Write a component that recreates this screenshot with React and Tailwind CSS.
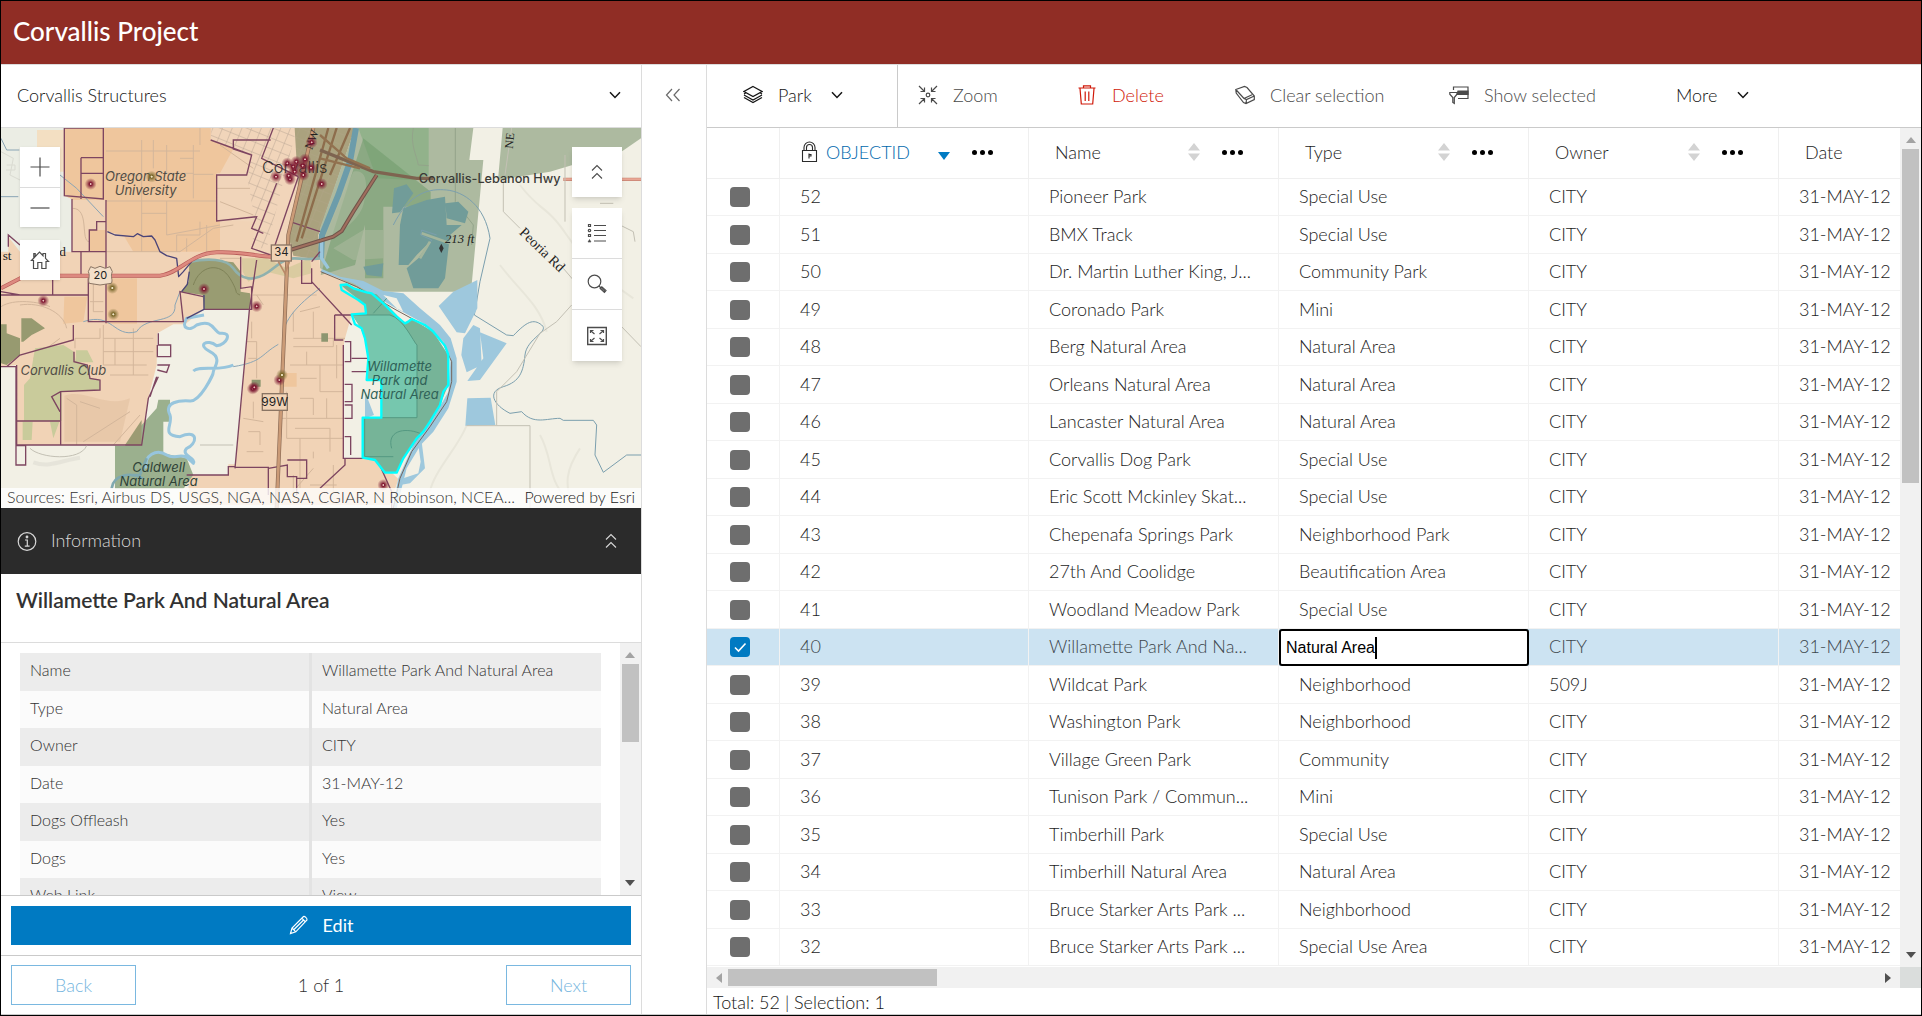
import { useState } from 'react';

const parks = [
  [52, 'Pioneer Park', 'Special Use', 'CITY'],
  [51, 'BMX Track', 'Special Use', 'CITY'],
  [50, 'Dr. Martin Luther King, J...', 'Community Park', 'CITY'],
  [49, 'Coronado Park', 'Mini', 'CITY'],
  [48, 'Berg Natural Area', 'Natural Area', 'CITY'],
  [47, 'Orleans Natural Area', 'Natural Area', 'CITY'],
  [46, 'Lancaster Natural Area', 'Natural Area', 'CITY'],
  [45, 'Corvallis Dog Park', 'Special Use', 'CITY'],
  [44, 'Eric Scott Mckinley Skat...', 'Special Use', 'CITY'],
  [43, 'Chepenafa Springs Park', 'Neighborhood Park', 'CITY'],
  [42, '27th And Coolidge', 'Beautification Area', 'CITY'],
  [41, 'Woodland Meadow Park', 'Special Use', 'CITY'],
  [40, 'Willamette Park And Na...', 'Natural Area', 'CITY'],
  [39, 'Wildcat Park', 'Neighborhood', '509J'],
  [38, 'Washington Park', 'Neighborhood', 'CITY'],
  [37, 'Village Green Park', 'Community', 'CITY'],
  [36, 'Tunison Park / Commun...', 'Mini', 'CITY'],
  [35, 'Timberhill Park', 'Special Use', 'CITY'],
  [34, 'Timberhill Natural Area', 'Natural Area', 'CITY'],
  [33, 'Bruce Starker Arts Park ...', 'Neighborhood', 'CITY'],
  [32, 'Bruce Starker Arts Park ...', 'Special Use Area', 'CITY'],
];

const details = [
  ['Name', 'Willamette Park And Natural Area'],
  ['Type', 'Natural Area'],
  ['Owner', 'CITY'],
  ['Date', '31-MAY-12'],
  ['Dogs Offleash', 'Yes'],
  ['Dogs', 'Yes'],
  ['Web Link', 'View'],
];

const structureDots = [
  [272, 177], [828, 155], [880, 125], [915, 103], [870, 163], [866, 152], [910, 150], [908, 122], [933, 128], [862, 115], [889, 110], [884, 140],
  [935, 52], [965, 177], [612, 492], [770, 544], [130, 527], [758, 791], [763, 787], [838, 765], [1150, 1080],
];
const parkDots = [[455, 155], [337, 489], [340, 568], [846, 750]];

const Icon = ({ size = 20, children, className = '' }) => (
  <svg width={size} height={size} viewBox="0 0 20 20" fill="none" stroke="currentColor" strokeWidth="1.2" className={`shrink-0 ${className}`} aria-hidden="true">
    {children}
  </svg>
);

const ChevronDown = () => (
  <svg width="12" height="8" viewBox="0 0 12 8" fill="none" stroke="currentColor" strokeWidth="1.5" className="shrink-0" aria-hidden="true">
    <path d="M1 1.2 6 6.4 11 1.2" />
  </svg>
);

const ChevronsUp = ({ className = '' }) => (
  <svg width="12" height="16" viewBox="0 0 12 16" fill="none" stroke="currentColor" strokeWidth="1.1" className={className} aria-hidden="true">
    <path d="M1 6.5 6 1.5 11 6.5M1 14.5 6 9.5 11 14.5" />
  </svg>
);

const Arrow = ({ dir, className = '' }) => {
  const shapes = {
    up: 'M5 2 10 8H0Z',
    down: 'M5 8 0 2H10Z',
    left: 'M2 5 8 0V10Z',
    right: 'M8 5 2 0V10Z',
  };
  return (
    <svg width="10" height="10" viewBox="0 0 10 10" fill="currentColor" className={className} aria-hidden="true">
      <path d={shapes[dir]} />
    </svg>
  );
};

const ParkMap = () => (
  <svg viewBox="3 9 1920 1140" preserveAspectRatio="xMidYMid slice" className="absolute inset-0 h-full w-full" role="img" aria-label="Map of Corvallis">
    <defs>
      <pattern id="streets" width="27" height="30" patternUnits="userSpaceOnUse" patternTransform="rotate(22)">
        <path d="M0 0H27M0 0V30" stroke="#bba896" strokeWidth="3" fill="none" />
      </pattern>
      <radialGradient id="maroon">
        <stop offset="0.08" stopColor="#e8c5bc" />
        <stop offset="0.22" stopColor="#7d0f2c" />
        <stop offset="0.5" stopColor="#7d1c34" stopOpacity="0.6" />
        <stop offset="1" stopColor="#7d1c34" stopOpacity="0" />
      </radialGradient>
      <radialGradient id="olive">
        <stop offset="0.1" stopColor="#f0e5c8" />
        <stop offset="0.24" stopColor="#7a6728" />
        <stop offset="0.5" stopColor="#7a6a30" stopOpacity="0.6" />
        <stop offset="1" stopColor="#7a6a30" stopOpacity="0" />
      </radialGradient>
      <clipPath id="city">
        <path d="M193 9V212L216 222V380H60L25 335V380H3V725L50 720V960H425L445 820 470 720 472 625 520 598H555L612 553H748L706 1018H685V1050H560L345 1140H1170L1195 1062 1130 1000H1032V650L1055 570 1100 565 1180 560 1060 480 960 430 955 330 1065 9Z" />
      </clipPath>
    </defs>

    {/* land */}
    <rect x="3" y="9" width="1920" height="1140" fill="#f2f0e5" />
    <path d="M3 9H193V212L216 222V380H3Z" fill="#ebede4" />
    <path d="M3 80 40 100 30 150 70 170M20 120H45V135H18" stroke="#dadbd2" strokeWidth="3" fill="none" />
    <path d="M111 15H193V140H111Z" fill="#f3dfc2" />
    <path d="M1560 180C1620 260 1640 240 1700 330S1840 480 1900 520M1500 420C1560 500 1620 540 1640 620M1400 900C1380 960 1300 1040 1290 1100M1620 930C1660 1000 1640 1060 1700 1120M1740 970C1700 1030 1690 1080 1720 1140" stroke="#e8e6da" strokeWidth="6" fill="none" />
    <path d="M100 1012C150 1030 190 1004 240 998" stroke="#dddcd2" strokeWidth="12" fill="none" opacity="0.6" />

    {/* city limits */}
    <path d="M193 9V212L216 222V380H60L25 335V380H3V725L50 720V960H425L445 820 470 720 472 625 520 598H555L612 553H748L706 1018H685V1050H560L345 1140H1170L1195 1062 1130 1000H1032V650L1055 570 1100 565 1180 560 1060 480 960 430 955 330 1065 9Z" fill="#f1d3b6" />
    <path d="M345 1092 560 1050 575 1149H345Z" fill="#f2f0e5" />
    <g clipPath="url(#city)">
      <path d="M193 9H632V45L700 72 660 145V380H400L370 330 322 320 318 225H193Z" fill="#efc69d" />
      <path d="M318 460H411V596H318ZM193 515H262L250 590 190 596ZM268 315H318V380H268ZM838 744H890V785H838Z" fill="#efc69d" />
      <path d="M193 812C250 790 320 850 390 820L360 950H193Z" fill="#e4c3a4" opacity="0.7" />
      <path d="M635 9H1070L955 330 870 400 755 370 765 290 650 285V145H740L755 90 632 45Z" fill="#f1d5ba" />
      <path d="M635 9H890L800 370 755 370 765 290 740 145 755 90 632 45Z" fill="url(#streets)" />
      <path d="M884 9H1070L962 310V405L880 392 866 335 895 200Z" fill="#aaa27e" />
      <path d="M884 9H1070L962 310V405L880 392 866 335 895 200Z" fill="url(#streets)" opacity="0.35" />
    </g>

    {/* local streets */}
    <path
      d="M318 228H650M318 78H600M425 45V380M500 228V330L660 300M580 148H640M580 60V220M500 60V145H580M425 265H500M318 380H540L640 310 700 300M460 45V130M340 150H425M530 380V330H600V290M650 190H750M660 230 760 270M218 250C270 250 240 350 268 350M60 540C120 530 190 560 200 610M3 545C40 520 120 530 150 545M100 700 180 640M200 820 230 840V960M240 830 300 850M420 870 340 960M390 860 250 950M280 470V560H310M270 530H310M740 510H950M900 560 960 545M880 640H1035M870 720H1030M860 800V940H1030M840 880H1035M900 940V1090M740 650H770V760M730 880 790 890M740 980H790M870 1110 940 1030M1000 1020V1100M660 400H720M770 510 790 540M225 640H300V610M310 600V720H440M310 640H460M310 680H460M345 640V720M400 610V750M330 750H445M225 640V670M880 560V620M940 560V640M880 665H1000V640M920 680V720M960 720V800H1030M900 760H950M900 820H940V870M980 820V880M885 910H990V980M1010 660V760M940 980V1000M755 590V640M745 700H770M760 830V880M745 920H780V960M880 1050V1110M930 1080H1010M660 60 760 130M600 9V60M540 100H580M620 300V380M560 340V380"
      stroke="#d3b69b"
      strokeWidth="3"
      fill="none"
    />

    {/* parks */}
    <path d="M568 410 610 402 700 412 722 440V500L750 505V553H612L608 510 542 500 566 470Z" fill="#999c72" />
    <path d="M3 598H20V625L60 640V690L20 720 3 715ZM64 580H95L135 610 95 630 70 650H64Z" fill="#979a70" />
    <path d="M105 670 190 660 222 680 228 712 262 720 268 760 300 765V795L185 800V888H72V780L90 760Z" fill="#c9cb9b" />
    <path d="M228 676H262L280 712H228ZM68 890H98L95 945H68ZM150 890H178L160 940Z" fill="#c9cb9b" />
    <path d="M725 400H800L860 430 930 400 935 445 880 460 800 440 745 470 728 440Z" fill="#dacba0" />
    <path d="M345 962H375L425 900 470 850 475 824H510V890H490V985L560 1000 580 1050 550 1092H345Z" fill="#9bb08e" />
    <path d="M425 885 375 960H424Z" fill="#9c9b73" />
    <path d="M755 764H782V785H755ZM964 625H984V650H964Z" fill="#8d9670" />
    <path d="M580 480C600 420 660 410 690 460S700 500 720 510" stroke="#7f8258" strokeWidth="3" fill="none" />

    {/* flood plain east of the river */}
    <path d="M1065 9H1420L1408 105H1450L1413 500H1095L960 430V310Z" fill="#adbaa0" />
    <path d="M1508 9H1923V40L1850 90 1750 110 1650 140 1494 165Z" fill="#adbaa0" />
    <path d="M1075 9H1286V150L1240 165 1130 160Z" fill="#92b28b" />
    <path d="M1090 40 1292 200V245H1150V460H1095V300L1065 420 962 450 1000 320Z" fill="#6f9a6c" opacity="0.55" />
    <path d="M1060 140C1110 130 1100 200 1090 240S1020 330 975 340ZM1090 315H1150V400L1060 405 1000 370Z" fill="#aab99d" opacity="0.6" />
    <path d="M1240 9C1230 60 1250 90 1255 120L1286 122M1366 9V230L1420 300 1415 360" stroke="#93a48a" strokeWidth="3" fill="none" />
    <path d="M1182 190 1220 178 1240 205 1200 262 1176 265ZM1090 425 1150 415 1145 455 1100 450ZM1210 250 1280 225 1335 215 1340 300 1385 300 1350 330 1335 460 1315 490 1240 490 1220 430 1255 400 1290 350 1250 390 1225 420 1196 420 1200 300ZM1336 235 1375 230 1405 260 1395 295 1340 280Z" fill="#719c99" />
    <path d="M1310 330 1265 315 1262 330 1295 345 1260 400M1180 300C1230 200 1290 190 1340 195S1455 240 1470 340L1440 470 1423 570 1520 630 1540 632C1580 590 1600 580 1625 600S1580 640 1575 690 1560 770 1510 785 1480 840 1530 865L1565 860C1600 900 1640 880 1680 880L1690 886H1780L1790 900 1785 990 1810 1042 1880 990 1923 990" stroke="#7b9fae" strokeWidth="3" fill="none" />
    <path d="M1260 400 1290 350M1265 325 1350 355" stroke="#a3b59c" strokeWidth="8" fill="none" />

    {/* water */}
    <path d="M965 432 1020 455 1090 468 1150 498 1210 505 1260 550 1320 600 1352 640 1370 700V770L1345 850 1300 920 1262 960 1220 1030 1190 1149H1178L1195 1060 1240 960 1300 880 1345 800 1352 700 1330 650 1280 600 1180 545 1060 475 963 440Z" fill="#9ac6dc" />
    <path d="M1190 520 1150 510 1190 550 1210 560Z" fill="#f2f0e5" />
    <path d="M1068 9 1050 110 1015 210 966 330 963 400" stroke="#6c9caa" strokeWidth="18" fill="none" />
    <path d="M965 340V400L985 430" stroke="#9ac6dc" strokeWidth="10" fill="none" />
    <path d="M962 440 1070 485 1185 553 1280 605 1330 655 1355 710V770L1340 830 1290 905 1235 980 1200 1060 1180 1149" stroke="#75645c" strokeWidth="3" fill="none" />
    <path d="M1316 543 1360 500 1432 465V550L1395 625 1370 622ZM1420 600 1440 610 1445 720 1400 742 1384 690 1390 640ZM1440 622 1520 655 1440 765 1402 768 1450 700ZM1402 820 1472 818 1486 900 1396 902ZM1265 950 1275 1030 1230 1075 1200 1080 1210 1060 1255 1045 1262 1010 1255 960ZM1095 800 1122 870 1095 880Z" fill="#9ec8dd" />
    <path d="M612 570 560 580C540 610 570 620 590 600 640 580 640 620 660 625 700 620 680 660 650 662 620 640 590 660 630 680 670 700 640 730 640 740S600 830 570 828 490 830 510 870C520 900 480 930 540 935 600 910 590 960 560 970 540 990 590 1000 580 1015 540 970 530 1010 500 990 470 970 430 990 440 1030M580 738C600 720 660 740 700 720" stroke="#97c5dd" strokeWidth="9" fill="none" strokeLinejoin="round" />
    <path d="M430 1060C390 1040 340 1050 335 1090M440 1000 420 1050 390 1050" stroke="#7fa9b0" strokeWidth="8" fill="none" />
    <path d="M570 410C620 400 680 400 700 430S760 480 820 430 880 410 960 400" stroke="#8fb1ad" strokeWidth="8" fill="none" />
    <path d="M3 40 20 75H58M180 150 230 190 310 275M3 215H55M250 590C340 560 340 640 410 620 440 570 530 600 525 540L540 500M850 630C850 590 890 540 960 490M700 725C790 710 780 690 835 658" stroke="#8aa5b5" strokeWidth="3" fill="none" />

    {/* tax lots and boundaries */}
    <path
      d="M193 9V212L310 222V9ZM243 98H312M243 98V222M243 145H312M216 222V380H320M268 382V315H290V290H318M3 500 60 510H265V590H550L540 500 610 515M25 365V330L60 360M265 460V510M158 460V510M318 225V595M243 380V450M3 510H60M220 600V645L60 690 20 725M475 625V660H512V695H472V660M472 720H508L500 742 472 735M470 755 450 815M50 720V960H425L445 820 475 755M222 680V710L262 720 270 760 300 765V795L182 800V960M52 888H182M182 800 155 815 180 860M3 725H48V962H77V1020H48V962M632 45 755 90 740 150H650V288L770 275 755 310 790 325M755 90 700 72V45H812M820 9 785 100 895 155M830 175 755 370 812 390M895 155 815 390M722 395V490L755 485V553H612M770 405 748 556 705 1030M705 1027H805V1110M805 1030 862 1020V1055H890V1110M862 1005H920V1060H890M705 1025H685V1050H560M905 405V475H935V430M935 470 1055 600M1004 570H1055M1004 570V645H1030M1030 660V1000H1135M1034 650H1052V710H1034M1034 778H1056V830H1034M1034 840H1056V880H1034M1034 935H1052V990M1055 700H1105V740H1055M960 380 935 410M870 290 960 320M1035 1000V1020L960 1090M1130 1000 1175 1100V1149"
      stroke="#7d4560"
      strokeWidth="4"
      fill="none"
    />
    <path d="M322 320 345 330 400 335 412 326 430 335 455 333 465 345 480 380 500 392 530 400 536 455 550 440 575 410M545 500 562 478 568 440M612 510V553L560 580" stroke="#4a4478" strokeWidth="4" fill="none" strokeLinejoin="round" />

    {/* highways */}
    <path d="M940 9 865 330 830 1149" stroke="#8a6a55" strokeWidth="12" fill="none" />
    <path d="M940 9 865 330 830 1149" stroke="#cb9b77" strokeWidth="8" fill="none" />
    <path d="M985 9 890 350M1010 9 905 340M1050 9 990 150" stroke="#8d6d4c" strokeWidth="7" fill="none" />
    <path d="M960 75 1120 140 1250 160 1300 160" stroke="#7e6450" strokeWidth="10" fill="none" />
    <path d="M960 30 1040 100 1110 130M960 100 1080 130" stroke="#927250" strokeWidth="7" fill="none" />
    <path d="M3 490 70 455 150 452H480C540 445 570 385 650 382S770 395 815 395" stroke="#b85c58" strokeWidth="12" fill="none" />
    <path d="M3 490 70 455 150 452H480C540 445 570 385 650 382S770 395 815 395" stroke="#dd8a80" strokeWidth="8" fill="none" />
    <path d="M870 375 1000 335 1025 318 1060 260 1130 150" stroke="#71544a" strokeWidth="12" fill="none" />
    <path d="M870 375 1000 335 1025 318 1060 260 1130 150" stroke="#a06e5e" strokeWidth="6" fill="none" />
    <path d="M1690 163H1923" stroke="#c98272" strokeWidth="10" fill="none" />
    <path d="M1690 163H1923" stroke="#e8a694" strokeWidth="6" fill="none" />
    <path d="M835 410 855 445 868 410" stroke="#b98968" strokeWidth="5" fill="none" />
    <path d="M1510 165V260L1560 310M1535 9 1515 150M1690 430 1720 465M1715 540 1670 590 1620 625 1550 740 1490 800V902H1590V1149M1400 902H1490M1695 90V290M1860 300 1900 320 1905 350M1860 600 1923 665M1800 235H1840M600 960H700M90 970C120 1000 240 1010 260 962" stroke="#c3c0b4" strokeWidth="3" fill="none" />

    {/* selected park */}
    <path d="M1022 480 1040 478 1090 500 1130 508 1190 570 1215 595 1235 582 1300 620 1325 660 1345 690V780L1320 840 1270 920 1210 1000 1190 1043H1155L1125 1005 1088 998V878H1144V765H1100L1105 700 1095 640 1080 605 1055 568 1098 565 1095 540Z" fill="#76b498" />
    <path d="M1058 570H1170C1210 580 1240 650 1251 660V878H1144V765H1100L1105 700 1095 640 1080 605Z" fill="#76c7ae" />
    <path d="M1058 570H1170C1210 580 1240 650 1251 660V878H1094M1094 880V995H1180M1175 970C1160 920 1210 905 1260 925M1120 565 1160 520" stroke="#559982" strokeWidth="3" fill="none" />
    <path d="M1022 480 1040 478 1060 490 1100 502 1115 505 1150 535 1190 575 1215 595 1225 590 1235 582 1275 600 1300 620 1325 650 1335 662 1345 690V780L1330 800 1320 840 1290 890 1270 920 1250 940 1210 1000 1190 1043H1155L1125 1005 1088 998V878H1144V765H1100L1105 700 1095 640 1085 610 1065 598 1055 568 1098 565 1095 540 1075 525 1025 495Z" stroke="#00ffff" strokeWidth="7" fill="none" strokeLinejoin="round" />

    {/* route shields */}
    <path d="M272 425 285 430 300 424 316 430 330 425 337 440C330 455 340 465 334 475L300 480 268 475C262 465 272 455 265 440Z" fill="#f3dfc9" stroke="#8a7564" strokeWidth="3" />
    <rect x="814" y="360" width="60" height="48" fill="#f1d3b6" stroke="#8a7564" strokeWidth="4" />
    <rect x="787" y="806" width="75" height="50" fill="#f1d3b6" stroke="#8a7564" strokeWidth="4" />
    <path d="M1324 356 1331 370 1324 384 1317 370Z" fill="#333" />

    <g className="font-[Inter,sans-serif]" fill="#222" textAnchor="middle">
      <text x="301" y="462" fontSize="33" fontWeight="400">20</text>
      <text x="844" y="393" fontSize="34" fontWeight="400">34</text>
      <text x="824" y="843" fontSize="36" fontWeight="400">99W</text>
      <text x="884" y="145" fontSize="49" fontWeight="300" fill="#33302c">Corvallis</text>
      <text x="1469" y="175" fontSize="38" fontWeight="500" fill="#3a3a36">Corvallis-Lebanon Hwy</text>
    </g>
    <g className="font-[Inter,sans-serif]" fontStyle="italic" fontWeight="400" fontSize="39" textAnchor="middle" fill="#514d46">
      <text x="437" y="168">Oregon State</text>
      <text x="437" y="210">University</text>
      <text x="190" y="751">Corvallis Club</text>
      <text x="476" y="1041" fill="#2e4238">Caldwell</text>
      <text x="476" y="1084" fill="#2e4238">Natural Area</text>
      <text x="1199" y="738" fill="#2f6157">Willamette</text>
      <text x="1199" y="781" fill="#2f6157">Park and</text>
      <text x="1199" y="823" fill="#2f6157">Natural Area</text>
    </g>
    <g className="font-['Liberation_Serif',serif]" fontWeight="400" fill="#222">
      <text x="1335" y="354" fontSize="38" fontStyle="italic">213 ft</text>
      <text fontSize="43" textAnchor="middle" transform="translate(1617 384) rotate(44)">Peoria Rd</text>
      <text fontSize="36" transform="translate(936 76) rotate(-70)">NW</text>
      <text fontSize="36" transform="translate(1538 72) rotate(-84)">NE</text>
      <text x="8" y="406" fontSize="40">st</text>
      <text x="178" y="394" fontSize="40">d</text>
    </g>

    {structureDots.map(([x, y]) => (
      <circle key={`s${x}-${y}`} cx={x} cy={y} r="18" fill="url(#maroon)" />
    ))}
    {parkDots.map(([x, y]) => (
      <circle key={`p${x}-${y}`} cx={x} cy={y} r="18" fill="url(#olive)" />
    ))}
  </svg>
);

const mapButton = 'grid place-items-center bg-white text-[#4c4c4c]';

const MapPanel = () => (
  <div className="relative min-h-0 flex-1 overflow-hidden bg-[#f2f0e5]">
    <ParkMap />
    <div className="absolute top-[19px] left-[19px] w-10 shadow-sm">
      <button type="button" aria-label="Zoom in" className={`${mapButton} h-10 w-10`}>
        <Icon><path d="M.5 10H19.5M10 .5V19.5" /></Icon>
      </button>
      <button type="button" aria-label="Zoom out" className={`${mapButton} h-10 w-10 border-t border-[#dcdcdc]`}>
        <Icon><path d="M.5 10H19.5" /></Icon>
      </button>
    </div>
    <button type="button" aria-label="Default extent" className={`${mapButton} absolute top-28 left-[19px] h-10 w-10 shadow-sm`}>
      <Icon><path d="M1.5 10.5 9.5 2 13 5.7V3.5H15.5V8.3L18.5 11.5H16V18.5H11.8V12.5H7.8V18.5H3.5V10.5H1.5ZM3.8 8V3.5H5.2V6.5" /></Icon>
    </button>
    <button type="button" aria-label="Collapse tools" className={`${mapButton} absolute top-[19px] right-[19px] h-[50px] w-[50px] shadow-md`}>
      <ChevronsUp />
    </button>
    <div className="absolute top-20 right-[19px] w-[50px] shadow-md">
      <button type="button" aria-label="Legend" className={`${mapButton} h-[51px] w-full border-b border-[#dcdcdc]`}>
        <Icon>
          <path d="M7 2.5H19M7 7.5H19M7 12.5H19M7 18H19M1.5 1.5H3.5V3.5H1.5ZM1.5 11.5H3.5V13.5H1.5Z" />
          <circle cx="2.5" cy="7.5" r="1.2" />
          <path d="M2.5 16.5 4 19H1Z" fill="currentColor" strokeWidth="0.6" />
        </Icon>
      </button>
      <button type="button" aria-label="Search" className={`${mapButton} h-[51px] w-full border-b border-[#dcdcdc]`}>
        <Icon>
          <circle cx="7.5" cy="7.5" r="6.3" />
          <path d="M12 12 13.5 13.5M13.2 14.4 14.8 12.8 19 16.5 17.4 18.4Z" />
          <path d="M14.5 14 18 17.3" />
        </Icon>
      </button>
      <button type="button" aria-label="Full screen" className={`${mapButton} h-[51px] w-full`}>
        <Icon>
          <path d="M.7 1.5H19.3V18.5H.7Z" strokeWidth="1.4" />
          <path d="M3.5 7V4.5H6.5M4 5 7.5 8M13.5 4.5H16.5V7M16 5 12.5 8M3.5 13V15.5H6.5M4 15 7.5 12M13.5 15.5H16.5V13M16 15 12.5 12" />
        </Icon>
      </button>
    </div>
    <div className="absolute inset-x-0 bottom-0 flex h-5 items-center justify-between bg-white/80 px-[6px] pb-0.5 text-base leading-5 text-[#323232]">
      <span className="truncate">Sources: Esri, Airbus DS, USGS, NGA, NASA, CGIAR, N Robinson, NCEA...</span>
      <span className="shrink-0 text-[#202020]">
        Powered by <a href="#esri">Esri</a>
      </span>
    </div>
  </div>
);

const InfoPanel = () => (
  <>
    <div className="flex h-[66px] shrink-0 items-center gap-[14px] bg-[#2b2b2b] px-4 pr-6 text-[#d8d8d8]">
      <Icon>
        <circle cx="10" cy="10.5" r="8.8" />
        <path d="M8 9H10.3V15M7.8 15.2H12.6" />
        <circle cx="10" cy="6" r="0.8" fill="currentColor" />
      </Icon>
      <h2 className="flex-1 pb-0.5 text-lg">Information</h2>
      <button type="button" aria-label="Collapse information">
        <ChevronsUp />
      </button>
    </div>
    <h3 className="h-[69px] shrink-0 border-b border-[#dcdcdc] px-[15px] pt-3 text-[21px] leading-7 font-semibold text-[#323232]">Willamette Park And Natural Area</h3>
    <div className="flex h-[252px] shrink-0">
      <div className="min-w-0 flex-1 overflow-hidden pt-[10px] pr-[19px] pl-[19px]">
        <table className="w-full table-fixed text-base leading-5 text-[#323232]">
          <tbody>
            {details.map(([label, value]) => (
              <tr key={label} className="h-[37px] odd:h-[38px] odd:bg-[#ececec] even:bg-[#fbfbfb]">
                <th scope="row" className="border-r-[3px] border-[#e3e3e3] pb-1 pl-[10px] text-left align-middle font-light">{label}</th>
                <td className="pb-1 pl-[10px]">{value}</td>
              </tr>
            ))}
          </tbody>
        </table>
      </div>
      <div className="flex w-[21px] flex-col items-center bg-[#f1f1f1] py-[7px] text-[#505050]">
        <Arrow dir="up" className="text-[#a3a3a3]" />
        <div className="mt-1 h-[78px] w-[17px] bg-[#c1c1c1]" />
        <Arrow dir="down" className="mt-auto" />
      </div>
    </div>
    <div className="shrink-0 border-y border-[#cacaca] p-[10px]">
      <button type="button" className="flex h-[39px] w-full items-center justify-center gap-[14px] bg-[#007ac2] pb-0.5 text-lg font-normal text-white">
        <Icon><path d="M1.5 18.5 3 13 14.5 1.5C15.5.8 18.5 3.5 18 5L6.8 16.8ZM3 13 6.8 16.8M12.8 3.2 16.5 7M4.5 15 14.8 4.8" /></Icon>
        Edit
      </button>
    </div>
    <div className="flex h-[58px] shrink-0 items-center justify-between px-[10px] text-lg text-[#74b5de]">
      <button type="button" className="h-10 w-[125px] border border-[#7ab8e0]">Back</button>
      <span className="text-[#323232]">1 of 1</span>
      <button type="button" className="h-10 w-[125px] border border-[#7ab8e0]">Next</button>
    </div>
  </>
);

const Toolbar = () => (
  <div className="flex h-[63px] shrink-0 items-stretch border-b border-[#cacaca] text-lg text-[#4a4a4a]">
    <button type="button" className="flex w-[191px] items-center gap-[15px] border-r border-[#cacaca] pb-0.5 pl-9 text-[#151515]">
      <Icon><path d="M10 1.5 19 6.5 10 11.5 1 6.5ZM1 10 10 15 19 10M1 12.5 10 17.5 19 12.5M3 7.8 1 9M17 7.8 19 9" /></Icon>
      <span className="pr-1">Park</span>
      <ChevronDown />
    </button>
    <button type="button" className="ml-5 flex w-[159px] items-center gap-[15px] pb-0.5">
      <Icon><path d="M1 1 6 6M2.5 6.5H6.5V2.5M19 1 14 6M17.5 6.5H13.5V2.5M1 19 6 14M2.5 13.5H6.5V17.5M19 19 14 14M17.5 13.5H13.5V17.5" /><circle cx="10" cy="10" r="1.8" /></Icon>
      Zoom
    </button>
    <button type="button" className="flex w-[158px] items-center gap-[15px] pb-0.5 text-[#d01808]">
      <Icon><path d="M1.5 3H18.5M6.5 3V.8H13.5V3M3 3.5 4.3 19H15.7L17 3.5M8.2 6.5V16M11.8 6.5V16" /></Icon>
      Delete
    </button>
    <button type="button" className="flex w-[214px] items-center gap-[15px] pb-0.5">
      <Icon strokeWidth="1"><path d="M.8 4.5 9.5 1.5 12 2.5 19.3 11V14.5L11 18.5 8.5 17.5 1.2 8ZM.8 4.5 9 13.5 11.5 14.5 19.3 11M11.5 14.5 11 18.5M9 13.5 17 9.8" /></Icon>
      Clear selection
    </button>
    <button type="button" className="flex w-[227px] items-center gap-[15px] pb-0.5">
      <Icon>
        <path d="M4.5 5V2H19V13.5H9" />
        <path d="M9 6H19V9.5H8Z" fill="currentColor" />
        <path d="M.8 7.5H8.2V9L5.3 12.5V18.5L3.8 17.5V12.5L.8 9.2Z" />
      </Icon>
      Show selected
    </button>
    <button type="button" className="flex items-center gap-5 pb-0.5 text-[#151515]">
      More
      <ChevronDown />
    </button>
  </div>
);

const ColumnMenu = ({ label }) => (
  <button type="button" aria-label={`${label} options`} className="flex gap-[3px]">
    <span className="h-[5px] w-[5px] rounded-full bg-black" />
    <span className="h-[5px] w-[5px] rounded-full bg-black" />
    <span className="h-[5px] w-[5px] rounded-full bg-black" />
  </button>
);

const SortableHeader = ({ label }) => (
  <th scope="col" className="border-r border-b border-[#efefef] pr-[35px] pb-0.5 pl-[26px] text-left font-light">
    <div className="flex items-center">
      <span className="flex-1">{label}</span>
      <button type="button" aria-label={`Sort by ${label}`} className="mr-[22px] text-[#d3d3d3]">
        <svg width="12" height="18" viewBox="0 0 12 18" fill="currentColor" aria-hidden="true">
          <path d="M6 0 12 7.5H0ZM6 18 0 10.5H12Z" />
        </svg>
      </button>
      <ColumnMenu label={label} />
    </div>
  </th>
);

const cell = 'truncate border-r border-b border-[#f2f2f2] pb-0.5 pl-5';

const ParkTable = ({ selected, onToggle }) => {
  const [draft, setDraft] = useState('Natural Area');

  return (
    <table className="w-full table-fixed border-separate border-spacing-0 text-lg leading-6 text-[#1c1c1c]">
      <colgroup>
        <col className="w-[73px]" />
        <col className="w-[249px]" />
        <col className="w-[250px]" />
        <col className="w-[250px]" />
        <col className="w-[250px]" />
        <col />
      </colgroup>
      <thead>
        <tr className="h-[51px]">
          <th className="border-r border-b border-[#efefef]" aria-label="Select" />
          <th scope="col" className="border-r border-b border-[#efefef] pr-[35px] pb-0.5 pl-[21px] text-left font-light">
            <div className="flex items-center">
              <svg width="17" height="22" viewBox="0 0 17 22" fill="none" stroke="#2b2b2b" strokeWidth="1.1" className="mr-2" aria-hidden="true">
                <path d="M1.5 9.5H15.5V20.5H1.5ZM3 9V6.5A5.5 5.5 0 0 1 14 6.5V9M5.5 9V6.5A3 3 0 0 1 11.5 6.5V9M8 12.5V17.5M8 13.5H10V15H8" />
              </svg>
              <span className="flex-1 text-[#0068ad]">OBJECTID</span>
              <button type="button" aria-label="Sort by OBJECTID" className="mr-[22px] pt-2 text-[#007ac2]">
                <svg width="12" height="8" viewBox="0 0 12 8" fill="currentColor" aria-hidden="true">
                  <path d="M0 0H12L6 8Z" />
                </svg>
              </button>
              <ColumnMenu label="OBJECTID" />
            </div>
          </th>
          <SortableHeader label="Name" />
          <SortableHeader label="Type" />
          <SortableHeader label="Owner" />
          <th scope="col" className="border-b border-[#efefef] pb-0.5 pl-[26px] text-left font-light">Date</th>
        </tr>
      </thead>
      <tbody>
        {parks.map(([id, name, type, owner]) => {
          const active = id === selected;
          return (
            <tr key={id} className={`h-[37px] even:h-[38px] ${active ? 'bg-[#cce3f2] text-[#3c464c]' : ''}`}>
              <td className="border-r border-b border-[#f2f2f2]">
                <label className="ml-[23px] grid h-5 w-5">
                  <input
                    type="checkbox"
                    aria-label={`Select ${name}`}
                    checked={active}
                    onChange={() => onToggle(active ? null : id)}
                    className="col-start-1 row-start-1 h-5 w-5 appearance-none rounded bg-[#6e6e6e] checked:bg-[#007ac2]"
                  />
                  {active && (
                    <svg width="20" height="20" viewBox="0 0 20 20" fill="none" stroke="white" strokeWidth="1.6" className="pointer-events-none col-start-1 row-start-1" aria-hidden="true">
                      <path d="M5 10.5 8.5 14 15.5 6.5" />
                    </svg>
                  )}
                </label>
              </td>
              <td className={cell}>{id}</td>
              <td className={cell}>{name}</td>
              {active ? (
                <td className="p-0">
                  <div className="flex h-[37px] items-center rounded-[3px] border-2 border-black bg-white pl-[5px] font-['Liberation_Sans',sans-serif] text-base font-normal text-black">
                    <input aria-label="Type" value={draft} onChange={e => setDraft(e.target.value)} className="field-sizing-content outline-none" />
                    <span className="h-[22px] w-0.5 bg-black" />
                  </div>
                </td>
              ) : (
                <td className={cell}>{type}</td>
              )}
              <td className={cell}>{owner}</td>
              <td className="border-b border-[#f2f2f2] pb-0.5 pl-5 whitespace-nowrap">31-MAY-12</td>
            </tr>
          );
        })}
      </tbody>
    </table>
  );
};

const App = () => {
  const [selected, setSelected] = useState(40);

  return (
    <div className="flex h-screen flex-col overflow-hidden border border-black bg-white font-[Lato,sans-serif] font-light">
      <header className="flex h-16 shrink-0 items-center border-b border-[#dcdcdc] bg-[#902d25] px-3 pb-1">
        <h1 className="text-[26px] leading-8 font-medium text-white">Corvallis Project</h1>
      </header>
      <main className="flex min-h-0 flex-1 border-b border-[#cacaca]">
        <section className="flex w-1/3 shrink-0 flex-col">
          <button type="button" className="flex h-[63px] shrink-0 items-center justify-between border-b border-[#dcdcdc] pr-5 pb-0.5 pl-4 text-lg text-[#151515]">
            Corvallis Structures
            <ChevronDown />
          </button>
          <MapPanel />
          <InfoPanel />
        </section>
        <div className="flex w-[66px] shrink-0 justify-center border-x border-[#dcdcdc] pt-[22px] pr-0.5">
          <button type="button" aria-label="Collapse panel" className="h-4 text-[#6a6a6a]">
            <svg width="16" height="16" viewBox="0 0 16 16" fill="none" stroke="currentColor" strokeWidth="1.2" aria-hidden="true">
              <path d="M7 2 1.5 8 7 14M14.5 2 9 8 14.5 14" />
            </svg>
          </button>
        </div>
        <section className="flex min-w-0 flex-1 flex-col">
          <Toolbar />
          <div className="flex min-h-0 flex-1">
            <div className="min-w-0 flex-1 overflow-hidden">
              <ParkTable selected={selected} onToggle={setSelected} />
            </div>
            <div className="flex w-[21px] flex-col items-center bg-[#f1f1f1] py-[7px] text-[#505050]">
              <Arrow dir="up" className="text-[#a3a3a3]" />
              <div className="mt-1 h-[334px] w-[17px] bg-[#c1c1c1]" />
              <Arrow dir="down" className="mt-auto" />
            </div>
          </div>
          <div className="flex h-[21px] shrink-0 bg-[#f1f1f1]">
            <div className="flex flex-1 items-center px-[7px] text-[#505050]">
              <Arrow dir="left" className="text-[#a3a3a3]" />
              <div className="ml-1 h-[17px] w-[209px] bg-[#c1c1c1]" />
              <Arrow dir="right" className="ml-auto" />
            </div>
            <div className="w-[21px] bg-[#dadddc]" />
          </div>
          <footer className="flex h-[26px] shrink-0 items-center pt-0.5 pl-[6px] text-lg leading-5 text-[#151515]">Total: 52 | Selection: 1</footer>
        </section>
      </main>
    </div>
  );
};

export default App;
